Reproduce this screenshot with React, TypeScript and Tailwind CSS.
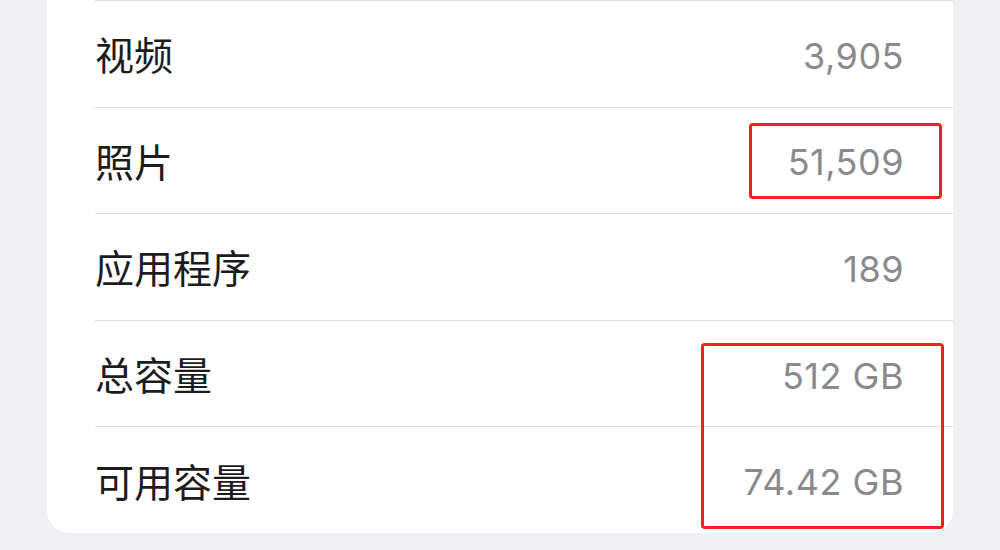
const rows = [
  { label: "视频", value: "3,905" },
  { label: "照片", value: "51,509" },
  { label: "应用程序", value: "189" },
  { label: "总容量", value: "512 GB" },
  { label: "可用容量", value: "74.42 GB" },
];

export default function App() {
  return (
    <div
      className="relative h-[550px] w-[1000px] overflow-hidden bg-[#efeff4]"
      style={{ fontFamily: 'Inter, "Noto Sans CJK SC", sans-serif' }}
    >
      <div className="ml-[47px] w-[906px] rounded-b-[22px] bg-white pl-[48px]">
        {rows.map((row) => (
          <div
            key={row.label}
            className="flex h-[106.6px] items-center justify-between border-t border-[#dedee0] pt-[4px] pr-[49px]"
          >
            <span className="text-[39px] leading-none text-[#1c1c1e]">{row.label}</span>
            <span className="text-[36px] leading-none tracking-[0.5px] text-[#8a8a8e]">{row.value}</span>
          </div>
        ))}
      </div>

      {/* highlight boxes */}
      <div className="absolute left-[749px] top-[123px] h-[76px] w-[193px] rounded-[4px] border-[3px] border-[#ff1c1c]" />
      <div className="absolute left-[701px] top-[343px] h-[186px] w-[243px] rounded-[4px] border-[3px] border-[#ff1c1c]" />
    </div>
  );
}
